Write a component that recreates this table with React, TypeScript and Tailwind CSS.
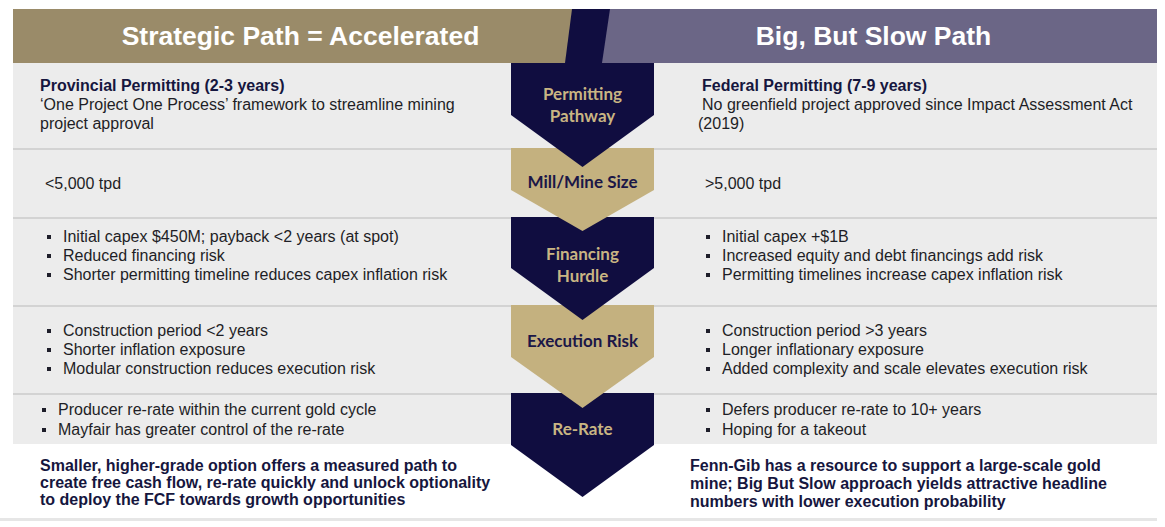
const chevrons = [
  {
    lines: ['Permitting', 'Pathway'],
    cls: 'h-[104px] pt-[20px] z-[5] bg-[#100d40] text-[#c9b583] [clip-path:polygon(0_0,100%_0,100%_52px,50%_100%,0_52px)]'
  },
  {
    lines: ['Mill/Mine Size'],
    cls: 'h-[83px] -mt-[19px] pt-[23px] z-[4] bg-[#c4b17f] text-[#1b1747] [clip-path:polygon(0_0,100%_0,100%_42px,50%_100%,0_42px)]'
  },
  {
    lines: ['Financing', 'Hurdle'],
    cls: 'h-[103px] -mt-[14px] pt-[26px] z-[3] bg-[#100d40] text-[#c9b583] [clip-path:polygon(0_0,100%_0,100%_51px,50%_100%,0_51px)]'
  },
  {
    lines: ['Execution Risk'],
    cls: 'h-[103px] -mt-[15px] pt-[25px] z-[2] bg-[#c4b17f] text-[#1b1747] [clip-path:polygon(0_0,100%_0,100%_52px,50%_100%,0_52px)]'
  },
  {
    lines: ['Re-Rate'],
    cls: 'h-[104px] -mt-[15px] pt-[25px] z-[1] bg-[#100d40] text-[#c9b583] [clip-path:polygon(0_0,100%_0,100%_52px,50%_100%,0_52px)]'
  }
];

function Bullets({ items, className }: { items: string[]; className: string }) {
  return (
    <ul className={className}>
      {items.map((item) => (
        <li key={item} className="flex items-center">
          <span className="w-[4px] h-[4px] bg-[#1e1e2a] shrink-0 mr-[12px]" />
          <span>{item}</span>
        </li>
      ))}
    </ul>
  );
}

function Chevron({ lines, cls }: { lines: string[]; cls: string }) {
  return (
    <div className={`relative shrink-0 flex flex-col items-center font-['Lato',sans-serif] font-bold text-[17px] leading-[22px] ${cls}`}>
      {lines.map((line) => (
        <span key={line}>{line}</span>
      ))}
    </div>
  );
}

export default function App() {
  return (
    <div className="w-[1165px] h-[527px] bg-white pt-[9px] font-['Liberation_Sans',Arial,sans-serif] text-[16px] leading-[19px] text-[#1e1e26] overflow-hidden">
      <div className="ml-[13px] w-[1144px] h-[54px] flex justify-between bg-[#100d40] text-white font-bold text-[26.5px]">
        <div className="w-[559px] flex items-center justify-center pl-[16px] bg-[#9a8b69] [clip-path:polygon(0_0,100%_0,calc(100%-7px)_100%,0_100%)]">
          Strategic Path = Accelerated
        </div>
        <div className="w-[555px] flex items-center justify-center pr-[12px] bg-[#6b6686] [clip-path:polygon(8px_0,100%_0,100%_100%,0_100%)]">
          Big, But Slow Path
        </div>
      </div>

      <div className="ml-[13px] grid grid-cols-[498px_143px_503px] items-start">
        <div className="flex flex-col">
          <div className="h-[85px] bg-[#ececec] pl-[27px] pt-[13px]">
            <div className="font-bold text-[#16163e]">Provincial Permitting (2-3 years)</div>
            <div>
              ‘One Project One Process’ framework to streamline mining
              <br />
              project approval
            </div>
          </div>
          <div className="h-[69px] bg-[#ececec] border-t-2 border-[#d3d3d3] pl-[32px] flex items-center">&lt;5,000 tpd</div>
          <div className="h-[88px] bg-[#ececec] border-t-2 border-[#d3d3d3] pl-[34px] pt-[8px]">
            <Bullets
              className=""
              items={[
                'Initial capex $450M; payback <2 years (at spot)',
                'Reduced financing risk',
                'Shorter permitting timeline reduces capex inflation risk'
              ]}
            />
          </div>
          <div className="h-[88px] bg-[#ececec] border-t-2 border-[#d3d3d3] pl-[34px] pt-[14px]">
            <Bullets
              className=""
              items={['Construction period <2 years', 'Shorter inflation exposure', 'Modular construction reduces execution risk']}
            />
          </div>
          <div className="h-[51px] bg-[#ececec] border-t-2 border-[#d3d3d3] pl-[29px] pt-[5px]">
            <Bullets
              className="leading-[20px]"
              items={['Producer re-rate within the current gold cycle', 'Mayfair has greater control of the re-rate']}
            />
          </div>
          <div className="h-[74px] pl-[27px] pt-[13px] font-bold leading-[17px] text-[#16163e]">
            Smaller, higher-grade option offers a measured path to
            <br />
            create free cash flow, re-rate quickly and unlock optionality
            <br />
            to deploy the FCF towards growth opportunities
          </div>
        </div>

        <div className="flex flex-col bg-[linear-gradient(to_bottom,#ececec_381px,transparent_381px)]">
          {chevrons.map((c) => (
            <Chevron key={c.lines[0]} lines={c.lines} cls={c.cls} />
          ))}
        </div>

        <div className="flex flex-col">
          <div className="h-[85px] bg-[#ececec] pl-[44px] pt-[13px]">
            <div className="font-bold text-[#16163e] pl-[4px]">Federal Permitting (7-9 years)</div>
            <div>
              <span className="pl-[4px]">No greenfield project approved since Impact Assessment Act</span>
              <br />
              (2019)
            </div>
          </div>
          <div className="h-[69px] bg-[#ececec] border-t-2 border-[#d3d3d3] pl-[51px] flex items-center">&gt;5,000 tpd</div>
          <div className="h-[88px] bg-[#ececec] border-t-2 border-[#d3d3d3] pl-[52px] pt-[8px]">
            <Bullets
              className=""
              items={['Initial capex +$1B', 'Increased equity and debt financings add risk', 'Permitting timelines increase capex inflation risk']}
            />
          </div>
          <div className="h-[88px] bg-[#ececec] border-t-2 border-[#d3d3d3] pl-[52px] pt-[14px]">
            <Bullets
              className=""
              items={['Construction period >3 years', 'Longer inflationary exposure', 'Added complexity and scale elevates execution risk']}
            />
          </div>
          <div className="h-[51px] bg-[#ececec] border-t-2 border-[#d3d3d3] pl-[52px] pt-[5px]">
            <Bullets className="leading-[20px]" items={['Defers producer re-rate to 10+ years', 'Hoping for a takeout']} />
          </div>
          <div className="h-[74px] pl-[36px] pt-[13px] font-bold leading-[18px] text-[#16163e]">
            Fenn-Gib has a resource to support a large-scale gold
            <br />
            mine; Big But Slow approach yields attractive headline
            <br />
            numbers with lower execution probability
          </div>
        </div>
      </div>

      <div className="h-[3px] w-[1157px] bg-[#e6e6e6]" />
    </div>
  );
}
